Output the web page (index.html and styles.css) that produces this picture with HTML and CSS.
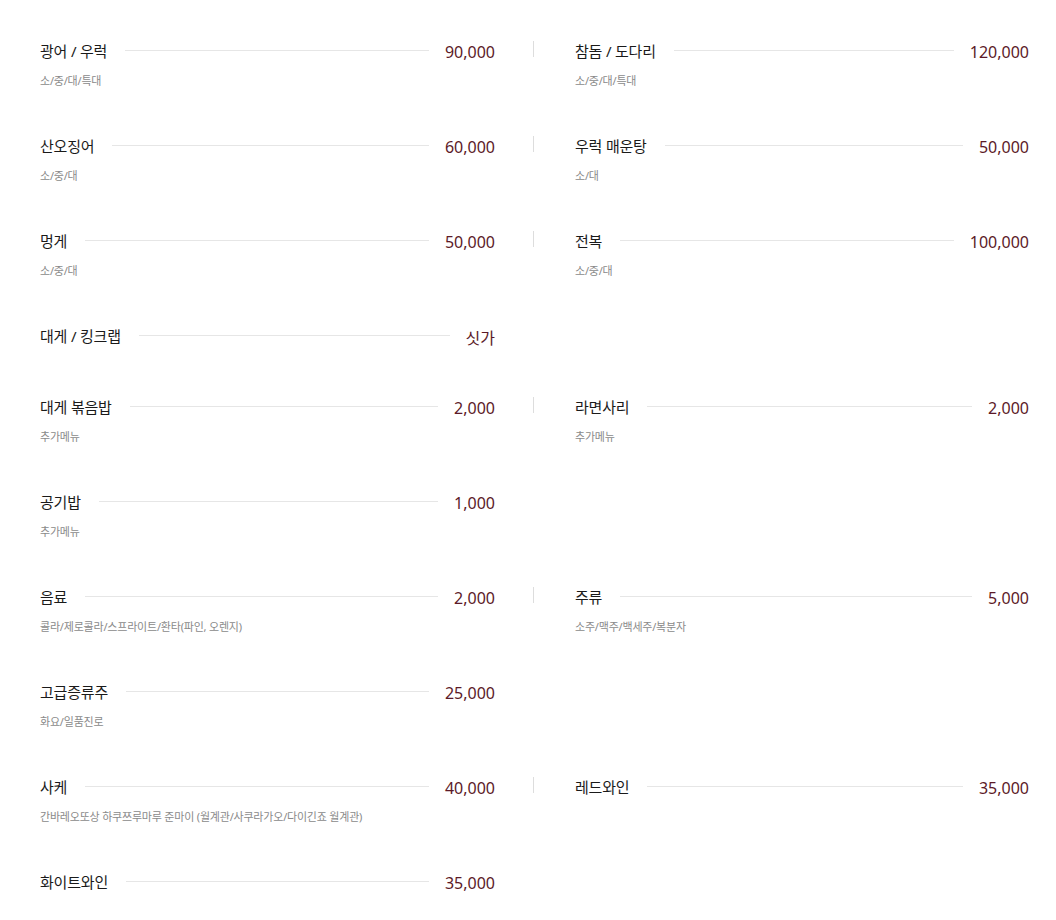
FILE: index.html
```html
<!DOCTYPE html>
<html lang="ko">
<head>
    <meta charset="UTF-8">
    <title>메뉴</title>
    <link rel="stylesheet" href="styles.css">
</head>
<body>
<div id="menu">
    <div class="row">
        <div class="item">
            <div class="head"><span class="name">광어 / 우럭</span><span class="line"></span><span class="price">90,000</span></div>
            <p class="desc">소/중/대/특대</p>
        </div>
        <span class="tick"></span>
        <div class="item right">
            <div class="head"><span class="name">참돔 / 도다리</span><span class="line"></span><span class="price">120,000</span></div>
            <p class="desc">소/중/대/특대</p>
        </div>
    </div>
    <div class="row">
        <div class="item">
            <div class="head"><span class="name">산오징어</span><span class="line"></span><span class="price">60,000</span></div>
            <p class="desc">소/중/대</p>
        </div>
        <span class="tick"></span>
        <div class="item right">
            <div class="head"><span class="name">우럭 매운탕</span><span class="line"></span><span class="price">50,000</span></div>
            <p class="desc">소/대</p>
        </div>
    </div>
    <div class="row">
        <div class="item">
            <div class="head"><span class="name">멍게</span><span class="line"></span><span class="price">50,000</span></div>
            <p class="desc">소/중/대</p>
        </div>
        <span class="tick"></span>
        <div class="item right">
            <div class="head"><span class="name">전복</span><span class="line"></span><span class="price">100,000</span></div>
            <p class="desc">소/중/대</p>
        </div>
    </div>
    <div class="row">
        <div class="item">
            <div class="head"><span class="name">대게 / 킹크랩</span><span class="line"></span><span class="price">싯가</span></div>
        </div>
    </div>
    <div class="row">
        <div class="item">
            <div class="head"><span class="name">대게 볶음밥</span><span class="line"></span><span class="price">2,000</span></div>
            <p class="desc">추가메뉴</p>
        </div>
        <span class="tick"></span>
        <div class="item right">
            <div class="head"><span class="name">라면사리</span><span class="line"></span><span class="price">2,000</span></div>
            <p class="desc">추가메뉴</p>
        </div>
    </div>
    <div class="row">
        <div class="item">
            <div class="head"><span class="name">공기밥</span><span class="line"></span><span class="price">1,000</span></div>
            <p class="desc">추가메뉴</p>
        </div>
    </div>
    <div class="row">
        <div class="item">
            <div class="head"><span class="name">음료</span><span class="line"></span><span class="price">2,000</span></div>
            <p class="desc">콜라/제로콜라/스프라이트/환타(파인, 오렌지)</p>
        </div>
        <span class="tick"></span>
        <div class="item right">
            <div class="head"><span class="name">주류</span><span class="line"></span><span class="price">5,000</span></div>
            <p class="desc">소주/맥주/백세주/복분자</p>
        </div>
    </div>
    <div class="row">
        <div class="item">
            <div class="head"><span class="name">고급증류주</span><span class="line"></span><span class="price">25,000</span></div>
            <p class="desc">화요/일품진로</p>
        </div>
    </div>
    <div class="row">
        <div class="item">
            <div class="head"><span class="name">사케</span><span class="line"></span><span class="price">40,000</span></div>
            <p class="desc">간바레오또상 하쿠쯔루마루 준마이 (월계관/사쿠라가오/다이긴죠 월계관)</p>
        </div>
        <span class="tick"></span>
        <div class="item right">
            <div class="head"><span class="name">레드와인</span><span class="line"></span><span class="price">35,000</span></div>
        </div>
    </div>
    <div class="row">
        <div class="item">
            <div class="head"><span class="name">화이트와인</span><span class="line"></span><span class="price">35,000</span></div>
        </div>
    </div>
</div>
</body>
</html>
```

FILE: styles.css
```css
*{
    margin:0;
    padding:0;
}
body{
    background:#fff;
    font-family:"Noto Sans","Noto Sans CJK KR",sans-serif;
    color:#222;
}
#menu{
    padding:37px 0 0 40px;
}
.row{
    display:flex;
    align-items:flex-start;
    margin-bottom:45px;
}
.item{
    width:455px;
}
.item.right{
    width:454px;
    margin-left:41px;
}
.tick{
    width:1px;
    height:16px;
    margin:4px 0 0 38px;
    background:#ddd;
}
.head{
    display:flex;
    align-items:center;
    height:26px;
}
.name{
    font-size:15px;
    letter-spacing:-0.2px;
    color:#1a1a1a;
    white-space:nowrap;
}
.line{
    flex:1;
    height:1px;
    background:#e6e6e6;
    margin:0 16px 0 18px;
}
.price{
    font-size:16px;
    color:#5c1a28;
    white-space:nowrap;
    padding-top:3px;
}
.desc{
    margin-top:11px;
    font-size:11px;
    line-height:13px;
    letter-spacing:-0.2px;
    color:#8a8a8a;
}
```
